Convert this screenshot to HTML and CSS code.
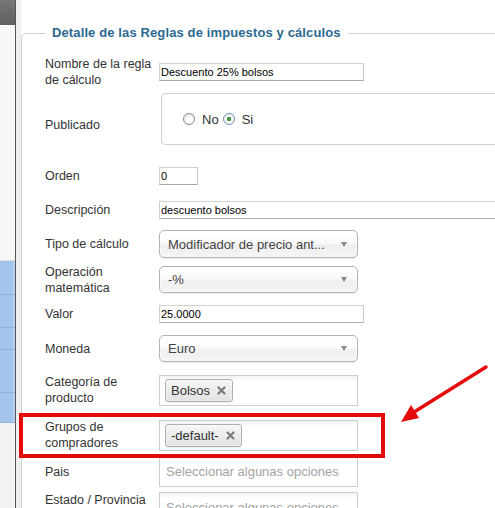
FILE: index.html
```html
<!DOCTYPE html>
<html lang="es">
<head>
<meta charset="utf-8">
<title>Detalle de las Reglas de impuestos y cálculos</title>
<link rel="stylesheet" href="styles.css">
</head>
<body>
<div class="page">
  <aside class="sidebar">
    <div class="sb-head"></div>
    <div class="sb-plain"></div>
    <div class="sb-list">
      <div class="sb-item sb-a"></div>
      <div class="sb-item sb-b"></div>
      <div class="sb-item sb-c"></div>
      <div class="sb-item sb-d"></div>
      <div class="sb-item sb-e"></div>
    </div>
  </aside>
  <div class="gutter"></div>
  <main class="main">
    <fieldset class="panel">
      <legend class="panel-title">Detalle de las Reglas de impuestos y cálculos</legend>

      <div class="row r-nombre">
        <label class="lbl">Nombre de la regla de cálculo</label>
        <div class="txt w-name">Descuento 25% bolsos</div>
      </div>

      <div class="row r-pub">
        <label class="lbl lbl-pub">Publicado</label>
        <div class="radios">
          <span class="radio"></span><span class="rtext">No</span>
          <span class="radio checked"></span><span class="rtext">Si</span>
        </div>
      </div>

      <div class="row r-orden">
        <label class="lbl">Orden</label>
        <div class="txt w-orden">0</div>
      </div>

      <div class="row r-desc">
        <label class="lbl">Descripción</label>
        <div class="txt w-full">descuento bolsos</div>
      </div>

      <div class="row r-tipo">
        <label class="lbl">Tipo de cálculo</label>
        <div class="select sel-tall"><span class="sel-text">Modificador de precio ant...</span><span class="caret"></span></div>
      </div>

      <div class="row r-oper">
        <label class="lbl">Operación matemática</label>
        <div class="select"><span class="sel-text">-%</span><span class="caret"></span></div>
      </div>

      <div class="row r-valor">
        <label class="lbl">Valor</label>
        <div class="txt w-name">25.0000</div>
      </div>

      <div class="row r-moneda">
        <label class="lbl">Moneda</label>
        <div class="select"><span class="sel-text">Euro</span><span class="caret"></span></div>
      </div>

      <div class="row r-cat">
        <label class="lbl">Categoría de producto</label>
        <div class="multi">
          <span class="tag">Bolsos<svg class="tag-x" width="9" height="9" viewBox="0 0 9 9"><path d="M1.5 1.5L7.5 7.5M7.5 1.5L1.5 7.5" stroke="#7a7a7a" stroke-width="2.2" stroke-linecap="round"/></svg></span>
        </div>
      </div>

      <div class="row r-grupos">
        <label class="lbl">Grupos de compradores</label>
        <div class="multi">
          <span class="tag">-default-<svg class="tag-x" width="9" height="9" viewBox="0 0 9 9"><path d="M1.5 1.5L7.5 7.5M7.5 1.5L1.5 7.5" stroke="#7a7a7a" stroke-width="2.2" stroke-linecap="round"/></svg></span>
        </div>
      </div>

      <div class="row r-pais">
        <label class="lbl">Pais</label>
        <div class="multi"><span class="ph">Seleccionar algunas opciones</span></div>
      </div>

      <div class="row r-estado">
        <label class="lbl lbl-top">Estado / Provincia</label>
        <div class="multi"><span class="ph">Seleccionar algunas opciones</span></div>
      </div>
    </fieldset>
  </main>

  <div class="highlight"></div>
  <svg class="arrow" width="100" height="70" viewBox="0 0 100 70">
    <line x1="91" y1="6" x2="16" y2="53" stroke="#e50a0a" stroke-width="3.5" stroke-linecap="round"/>
    <polygon points="6,61 16,44 24,57" fill="#e50a0a"/>
  </svg>
</div>
</body>
</html>
```

FILE: styles.css
```css
* { box-sizing: border-box; }

html, body {
  margin: 0;
  padding: 0;
  background: #fff;
}

body {
  font-family: "Liberation Sans", Arial, sans-serif;
  font-size: 12.5px;
  color: #333;
  overflow: hidden;
}

.page {
  position: relative;
  display: flex;
  height: 508px;
  overflow: hidden;
}

/* left strip */
.sidebar {
  width: 16px;
  flex: none;
  border-right: 1px solid #555;
  background: #f3f3f3;
  display: flex;
  flex-direction: column;
}
.sb-head {
  height: 25px;
  background: linear-gradient(#777, #5f5f5f);
}
.sb-plain {
  height: 236px;
  background: #f8f8f8;
  border-bottom: 1px solid #ddd;
}
.sb-list {
  background: #a8c7ec;
}
.sb-item {
  border-bottom: 1px solid #8eb0da;
  background: linear-gradient(90deg, #a4c4eb 80%, #bcd5f1);
}
.sb-a { height: 34px; }
.sb-b { height: 33px; }
.sb-c { height: 22px; }
.sb-d { height: 43px; }
.sb-e { height: 30px; }

.gutter {
  width: 5px;
  flex: none;
  background: #efefef;
}

.main {
  flex: 1;
  min-width: 0;
  padding-top: 25px;
  overflow: hidden;
}

.panel {
  margin: 0 -40px 0 0;
  border: 1px solid #cfcfcf;
  border-radius: 5px 0 0 0;
  padding: 15px 0 0 23px;
  min-width: 0;
}

.panel-title {
  padding: 0 7px;
  font-size: 13px;
  font-weight: bold;
  line-height: 16px;
  letter-spacing: 0.12px;
  color: #2b6991;
}

/* rows */
.row {
  display: grid;
  grid-template-columns: 114px 1fr;
  align-items: center;
}
.lbl {
  line-height: 16px;
  color: #333;
  padding-right: 4px;
}
.lbl-pub { margin-top: 12px; }
.lbl-top { align-self: start; }

.r-nombre { height: 32px; }
.r-pub    { height: 52px; margin-top: 5px; }
.r-orden  { height: 26px; margin-top: 18px; }
.r-desc   { height: 26px; margin-top: 8px; }
.r-tipo   { height: 28px; margin-top: 7px; }
.r-oper   { height: 33px; margin-top: 5px; }
.r-valor  { height: 26px; margin-top: 5px; }
.r-moneda { height: 27px; margin-top: 8px; }
.r-cat    { height: 31px; margin-top: 12px; }
.r-grupos { height: 31px; margin-top: 14px; }
.r-pais   { height: 31px; margin-top: 6px; }
.r-estado { height: 31px; margin-top: 5px; }

/* text inputs */
.txt {
  height: 18px;
  border: 1px solid;
  border-color: #d2d2d2 #c6c6c6 #a8a8a8 #d2d2d2;
  background: #fff;
  padding: 0 1px;
  font-family: "Liberation Sans", Arial, sans-serif;
  font-size: 11px;
  line-height: 16px;
  color: #000;
  white-space: nowrap;
  overflow: hidden;
}
.w-name { width: 205px; }
.w-orden { width: 39px; }
.w-full { width: 100%; }

/* radio group */
.radios {
  margin-left: 2px;
  height: 52px;
  border: 1px solid #cfcfcf;
  border-right: none;
  border-radius: 5px 0 0 5px;
  display: flex;
  align-items: center;
  padding: 0 0 0 21px;
  font-size: 13px;
  color: #333;
}
.radio {
  width: 12px;
  height: 12px;
  border-radius: 50%;
  border: 1px solid #7f8a96;
  background: radial-gradient(circle at 60% 65%, #fff 30%, #dcdcdc 100%);
  margin-right: 7px;
  flex: none;
}
.radio.checked {
  border-color: #6f8fae;
  background: radial-gradient(circle, #3f9a3a 0 2px, #fff 2.5px 3px, #dfe7ee 100%);
}
.rtext { margin-right: 4px; }

/* chosen style select */
.select {
  width: 199px;
  height: 27px;
  border: 1px solid #b3b3b3;
  border-radius: 5px;
  background: linear-gradient(#fff 0%, #fafafa 45%, #efefef 55%, #f4f4f4 100%);
  box-shadow: 0 0 3px #fff inset, 0 1px 1px rgba(0,0,0,0.08);
  display: flex;
  align-items: center;
  padding: 0 10px 0 8px;
  font-size: 13px;
  color: #444;
}
.sel-tall { height: 28px; }
.sel-text {
  flex: 1;
  white-space: nowrap;
  overflow: hidden;
}
.caret {
  width: 0;
  height: 0;
  border-left: 3.5px solid transparent;
  border-right: 3.5px solid transparent;
  border-top: 5px solid #8a8a8a;
  flex: none;
}

/* chosen style multi select */
.multi {
  width: 199px;
  height: 31px;
  border: 1px solid #cdcdcd;
  background: linear-gradient(#f2f2f2 0%, #fff 18%);
  padding: 0 5px;
  display: flex;
  align-items: center;
}
.tag {
  height: 23px;
  border: 1px solid #aeaeae;
  border-radius: 3px;
  background: linear-gradient(#f7f7f7 0%, #ececec 50%, #e2e2e2 100%);
  box-shadow: 0 0 2px #fff inset, 0 1px 0 rgba(0,0,0,0.05);
  display: flex;
  align-items: center;
  padding: 0 6px 0 5px;
  font-size: 13px;
  color: #333;
}
.tag-x {
  margin-left: 7px;
  flex: none;
}
.ph {
  padding-left: 1px;
  font-size: 13px;
  color: #a3a3a3;
  white-space: nowrap;
}

/* annotation overlay */
.highlight {
  position: absolute;
  left: 19px;
  top: 413px;
  width: 366px;
  height: 45px;
  border: 4px solid #e50a0a;
}
.arrow {
  position: absolute;
  left: 395px;
  top: 361px;
}
```
